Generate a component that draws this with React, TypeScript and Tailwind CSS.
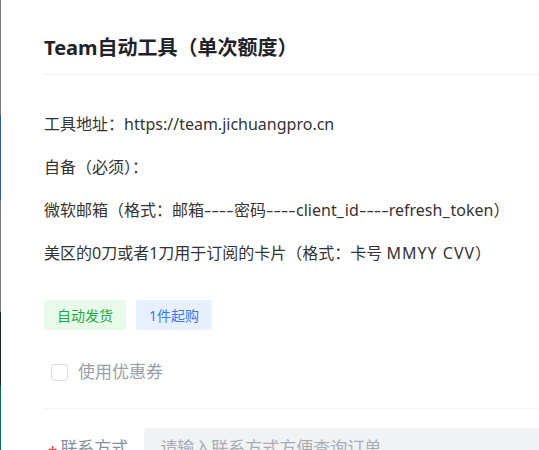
import React from 'react';

const font = { fontFamily: '"Noto Sans", "Noto Sans CJK SC", sans-serif' };

// the original font draws hyphens much wider than Noto Sans: stretch them
const Dash = () => (
    <span className="inline-block w-[30px] whitespace-nowrap">
        <span className="inline-block origin-left scale-x-[1.44]">----</span>
    </span>
);

export default function App() {
    return (
        <div className="flex w-[539px] h-[450px] overflow-hidden bg-white" style={font}>
            {/* edge of the page behind the drawer */}
            <div className="flex flex-col w-px shrink-0">
                <div className="h-[115px] bg-[#7b7e86]" />
                <div className="h-[85px] bg-[#2f58a8]" />
                <div className="h-[112px] bg-[#7b7e86]" />
                <div className="h-[73px] bg-[#1d2129]" />
                <div className="flex-1 bg-[#136b5c]" />
            </div>

            <div className="flex-1 pl-[43px] min-w-[600px]">
                <header className="pt-[35px] pb-[13px] border-b border-[#f2f3f5]">
                    <h1 className="text-[20px] leading-[26px] font-bold text-[#1f2329]">Team自动工具（单次额度）</h1>
                </header>

                <div className="mt-[36px] flex flex-col gap-[17px] text-[16px] leading-[26px] text-[#333]">
                    <p>工具地址：https://team.jichuangpro.cn</p>
                    <p>自备（必须）：</p>
                    <p>
                        微软邮箱（格式：邮箱<Dash />密码<Dash />client<span className="tracking-[1px]">_</span>id<Dash />refresh<span className="tracking-[1px]">_</span>token）
                    </p>
                    <p>
                        美区的0刀或者1刀用于订阅的卡片（格式：卡号 <span className="tracking-[1px]">MMYY CVV</span>）
                    </p>
                </div>

                <div className="mt-[34px] flex gap-[10px] text-[14px]">
                    <span className="h-[30px] px-[13px] flex items-center rounded-[3px] bg-[#e8fbea] text-[#1bab3c]">自动发货</span>
                    <span className="h-[30px] px-[13px] flex items-center rounded-[3px] bg-[#e7f0fe] text-[#3b76f0]">1件起购</span>
                </div>

                <label className="mt-[30px] pl-[7px] h-[24px] flex items-center gap-[10px] text-[17px] text-[#9a9ea6]">
                    <span className="w-[17px] h-[17px] rounded-[3px] border-[1.5px] border-[#dcdfe6] bg-white" />
                    使用优惠券
                </label>

                <div className="mt-[24px] border-t border-[#f2f3f5]" />

                <div className="mt-[19px] flex items-center">
                    <span className="pl-[4px] text-[#f53f3f] text-[17px] leading-none mt-[6px]">*</span>
                    <span className="ml-[3px] text-[17px] text-[#86909c]">联系方式</span>
                    <div className="ml-[16px] flex-1 h-[40px] rounded-[4px] bg-[#f1f2f4] pl-[16px] flex items-center text-[17px] text-[#a8adb5]">
                        请输入联系方式方便查询订单
                    </div>
                </div>
            </div>
        </div>
    );
}
